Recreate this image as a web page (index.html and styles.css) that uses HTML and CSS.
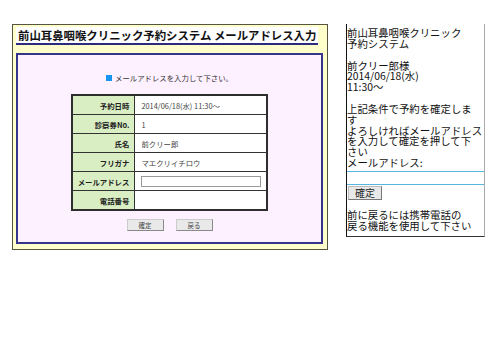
FILE: index.html
```html
<!DOCTYPE html>
<html lang="ja">
<head>
    <meta charset="UTF-8">
    <meta name="viewport" content="width=device-width, initial-scale=1.0">
    <title>メールアドレス入力</title>
    <link rel="stylesheet" href="styles.css">
</head>
<body>
    <div class="screens">
        <div class="pc">
            <h1 class="pc-title">前山耳鼻咽喉クリニック予約システム メールアドレス入力</h1>
            <div class="form-box">
                <p class="notice"><span class="mark"></span>メールアドレスを入力して下さい。</p>
                <table class="info">
                    <tr><th>予約日時</th><td>2014/06/18(水) 11:30〜</td></tr>
                    <tr><th>診察券No.</th><td>1</td></tr>
                    <tr><th>氏名</th><td>前クリー郎</td></tr>
                    <tr><th>フリガナ</th><td>マエクリイチロウ</td></tr>
                    <tr><th>メールアドレス</th><td><input type="text" class="mail-input"></td></tr>
                    <tr><th>電話番号</th><td></td></tr>
                </table>
                <div class="buttons">
                    <button class="btn">確定</button>
                    <button class="btn">戻る</button>
                </div>
            </div>
        </div>

        <div class="mobile">
            <p>前山耳鼻咽喉クリニック<br>予約システム</p>
            <p>前クリー郎様<br>2014/06/18(水)<br>11:30〜</p>
            <p class="m-label">上記条件で予約を確定しま<br>す<br>よろしければメールアドレス<br>を入力して確定を押して下<br>さい<br>メールアドレス:</p>
            <input type="text" class="m-input">
            <button class="m-btn">確定</button>
            <p>前に戻るには携帯電話の<br>戻る機能を使用して下さい</p>
        </div>
    </div>
</body>
</html>
```

FILE: styles.css
```css
body {
    margin: 0;
    background-color: #fff;
    font-family: "Noto Sans CJK JP", "Noto Sans", sans-serif;
    color: #222;
}

.screens {
    display: flex;
    align-items: flex-start;
    padding: 24px 0 0 12px;
}

/* PC screen */
.pc {
    width: 307px;
    height: 222px;
    border: 1px solid #55553f;
    background-color: #ffffcc;
    padding: 2px 4px 0 3px;
}

.pc-title {
    margin: 0 5px 0 0;
    padding: 1px 0 1px 2px;
    background-color: #fff;
    border-bottom: 2px solid #2b2b80;
    font-size: 11.4px;
    line-height: 14px;
    font-weight: bold;
    color: #111;
    white-space: nowrap;
}

.form-box {
    margin-top: 8px;
    height: 187px;
    border: 2px solid #35358c;
    background-color: #fdf0ff;
    display: flex;
    flex-direction: column;
    align-items: center;
}

.notice {
    margin: 18px 0 11px;
    font-size: 7.4px;
    line-height: 10px;
    color: #333;
    display: flex;
    align-items: center;
}

.mark {
    width: 6px;
    height: 6px;
    background-color: #1696f0;
    margin-right: 3px;
}

.info {
    border-collapse: collapse;
    width: 193px;
    border: 2px solid #2e2e2e;
    font-size: 7.4px;
}

.info th,
.info td {
    border: 1px solid #333;
    height: 18px;
    padding: 0 5px;
}

.info th {
    width: 50px;
    background-color: #d9eec3;
    text-align: right;
    font-weight: bold;
    color: #222;
    white-space: nowrap;
}

.info td {
    background-color: #fff;
    color: #444;
    padding-left: 6px;
}

.mail-input {
    width: 118px;
    height: 9px;
    border: 1px solid #999;
    padding: 0;
    margin: 0;
    display: block;
}

.buttons {
    margin-top: 8px;
    display: flex;
    gap: 12px;
}

.btn {
    width: 37px;
    height: 12px;
    padding: 0;
    border: 1px solid #8a8a8a;
    border-top-color: #ccc;
    border-left-color: #ccc;
    background-color: #e9e9e9;
    font-family: inherit;
    font-size: 6.5px;
    color: #444;
}

/* mobile screen */
.mobile {
    margin-left: 18px;
    width: 137px;
    height: 208px;
    border-left: 1px solid #111;
    border-right: 1px solid #aaa;
    border-bottom: 1px solid #333;
    padding-top: 4px;
    font-size: 10.4px;
    line-height: 10.8px;
    color: #111;
    white-space: nowrap;
}

.mobile p {
    margin: 0 0 11px;
}

.mobile .m-label {
    margin-bottom: 0;
}

.m-input {
    display: block;
    width: 100%;
    height: 12px;
    margin: 2px 0 1px;
    padding: 0;
    border: none;
    border-top: 1px solid #5ab4e0;
    border-bottom: 1px solid #5ab4e0;
    box-sizing: content-box;
}

.m-btn {
    display: block;
    width: 34px;
    height: 14px;
    margin: 0 0 10px 1px;
    padding: 0;
    border: 1px solid #777;
    border-top-color: #bbb;
    border-left-color: #bbb;
    background-color: #e8e8e8;
    font-family: inherit;
    font-size: 10px;
    line-height: 11px;
    color: #222;
}
```
